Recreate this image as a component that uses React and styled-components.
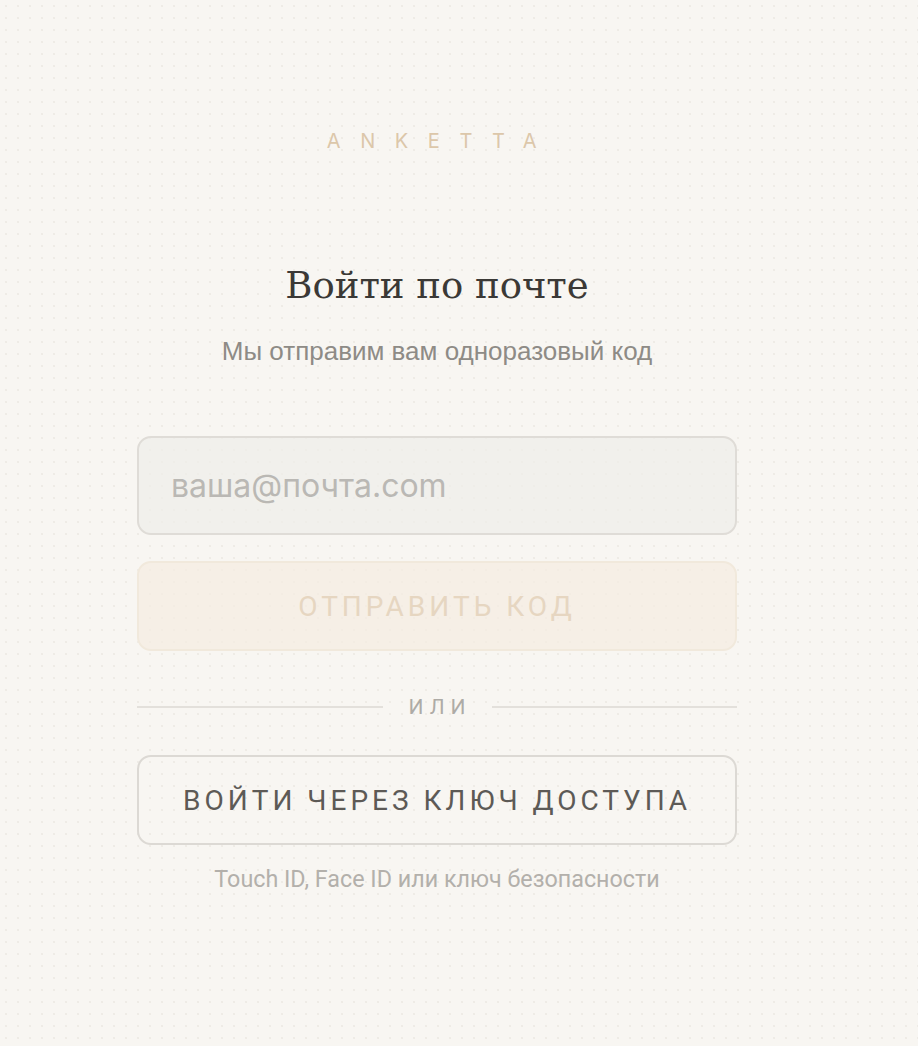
import React from "react";
import styled, { createGlobalStyle } from "styled-components";

const GlobalStyle = createGlobalStyle`
  html, body {
    margin: 0;
    padding: 0;
    background-color: #f8f6f2;
  }
  body {
    min-height: 1046px;
    background-image: radial-gradient(circle at 6px 6px, rgba(160, 150, 135, 0.11) 0.9px, transparent 1.1px);
    background-size: 12px 12px;
    font-family: "Liberation Sans", Arial, sans-serif;
  }
`;

const Page = styled.main`
  min-height: 1046px;
  box-sizing: border-box;
  display: flex;
  justify-content: center;
  padding: 129px 44px 0 0;
`;

const Panel = styled.section`
  width: 600px;
  display: flex;
  flex-direction: column;
  align-items: center;
`;

const Brand = styled.div`
  font-family: Inter, "Liberation Sans", sans-serif;
  font-size: 20px;
  letter-spacing: 19.6px;
  margin-right: -9px;
  color: #dcc7aa;
  line-height: 24px;
`;

const Title = styled.h1`
  margin: 108px 0 0;
  font-family: "DejaVu Serif", "Liberation Serif", serif;
  font-weight: 400;
  font-size: 37px;
  line-height: 50px;
  color: #3b3936;
`;

const Subtitle = styled.p`
  margin: 24px 0 0;
  font-family: "Liberation Sans", Arial, sans-serif;
  font-size: 26px;
  line-height: 32px;
  color: #8e8b86;
`;

const Form = styled.form`
  width: 100%;
  margin-top: 69px;
  display: flex;
  flex-direction: column;
`;

const EmailInput = styled.input`
  box-sizing: border-box;
  width: 100%;
  height: 99px;
  padding: 0 32px;
  border: 2px solid #dfdcd7;
  border-radius: 14px;
  background: rgba(238, 237, 233, 0.72);
  font-family: Inter, "Liberation Sans", sans-serif;
  font-size: 32px;
  color: #3b3936;
  outline: none;

  &::placeholder {
    color: #bab8b4;
  }
`;

const Button = styled.button`
  box-sizing: border-box;
  width: 100%;
  height: 90px;
  border-radius: 14px;
  font-family: Roboto, "Liberation Sans", sans-serif;
  font-size: 28px;
  letter-spacing: 4px;
  cursor: pointer;
  border: 2px solid ${(p) => (p.$primary ? "#f1e9dc" : "#dcd9d4")};
  background: ${(p) => (p.$primary ? "rgba(245, 237, 225, 0.7)" : "transparent")};
  color: ${(p) => (p.$primary ? "#e6d6c1" : "#5d5a56")};
  margin-top: ${(p) => p.$gap || 0}px;
`;

const Divider = styled.div`
  display: flex;
  align-items: center;
  gap: 26px;
  margin: 44px 0 36px;
  height: 24px;

  &::before,
  &::after {
    content: "";
    flex: 1;
    height: 2px;
    background: #e3e0db;
  }
`;

const DividerText = styled.span`
  font-family: Roboto, "Liberation Sans", sans-serif;
  font-size: 21px;
  letter-spacing: 6px;
  margin-right: -6px;
  color: #aeaba6;
`;

const Hint = styled.p`
  margin: 20px 0 0;
  text-align: center;
  font-family: Roboto, "Liberation Sans", sans-serif;
  font-size: 23.3px;
  line-height: 28px;
  color: #b3b0ab;
`;

export default function App() {
  return (
    <>
      <GlobalStyle />
      <Page>
        <Panel>
          <Brand>ANKETTA</Brand>
          <Title>Войти по почте</Title>
          <Subtitle>Мы отправим вам одноразовый код</Subtitle>
          <Form onSubmit={(e) => e.preventDefault()}>
            <EmailInput type="email" placeholder="ваша@почта.com" />
            <Button type="submit" $primary $gap={26}>
              ОТПРАВИТЬ КОД
            </Button>
            <Divider>
              <DividerText>ИЛИ</DividerText>
            </Divider>
            <Button type="button">ВОЙТИ ЧЕРЕЗ КЛЮЧ ДОСТУПА</Button>
            <Hint>Touch ID, Face ID или ключ безопасности</Hint>
          </Form>
        </Panel>
      </Page>
    </>
  );
}
